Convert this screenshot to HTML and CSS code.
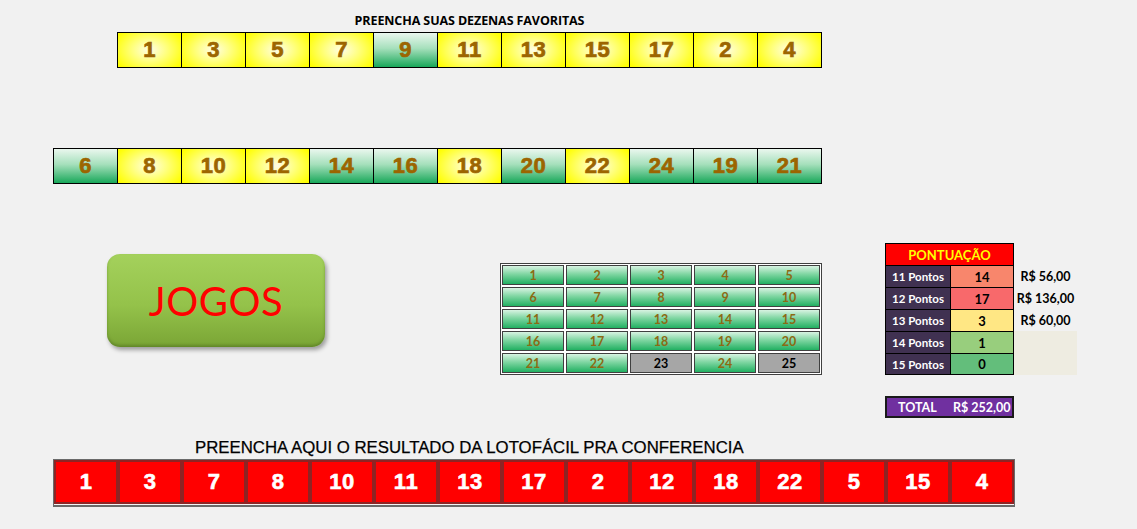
FILE: index.html
```html
<!DOCTYPE html>
<html>
<head>
<meta charset="utf-8">
<link rel="stylesheet" href="styles.css">
</head>
<body>
<div class="page">
  <div class="title1">PREENCHA SUAS DEZENAS FAVORITAS</div>
  <div class="row row1">
    <div class="cell y">1</div><div class="cell y">3</div><div class="cell y">5</div><div class="cell y">7</div><div class="cell g">9</div><div class="cell y">11</div><div class="cell y">13</div><div class="cell y">15</div><div class="cell y">17</div><div class="cell y">2</div><div class="cell y">4</div>
  </div>
  <div class="row row2">
    <div class="cell g">6</div><div class="cell y">8</div><div class="cell y">10</div><div class="cell y">12</div><div class="cell g">14</div><div class="cell g">16</div><div class="cell y">18</div><div class="cell g">20</div><div class="cell y">22</div><div class="cell g">24</div><div class="cell g">19</div><div class="cell g">21</div>
  </div>
  <div class="middle">
    <div class="jogos">JOGOS</div>
    <div class="grid">
      <div class="gc">1</div><div class="gc">2</div><div class="gc">3</div><div class="gc">4</div><div class="gc">5</div>
      <div class="gc">6</div><div class="gc">7</div><div class="gc">8</div><div class="gc">9</div><div class="gc">10</div>
      <div class="gc">11</div><div class="gc">12</div><div class="gc">13</div><div class="gc">14</div><div class="gc">15</div>
      <div class="gc">16</div><div class="gc">17</div><div class="gc">18</div><div class="gc">19</div><div class="gc">20</div>
      <div class="gc">21</div><div class="gc">22</div><div class="gc gray">23</div><div class="gc">24</div><div class="gc gray">25</div>
    </div>
    <div class="pont">
      <div class="ptable">
        <div class="phead">PONTUAÇÃO</div><div class="pblank"></div>
        <div class="plabel">11 Pontos</div><div class="pval v14">14</div><div class="pmoney">R$ 56,00</div>
        <div class="plabel">12 Pontos</div><div class="pval v17">17</div><div class="pmoney">R$ 136,00</div>
        <div class="plabel">13 Pontos</div><div class="pval v3">3</div><div class="pmoney">R$ 60,00</div>
        <div class="plabel">14 Pontos</div><div class="pval v1">1</div><div class="pmoney beige"></div>
        <div class="plabel">15 Pontos</div><div class="pval v0">0</div><div class="pmoney beige"></div>
      </div>
      <div class="total"><span>TOTAL</span><span>R$ 252,00</span></div>
    </div>
  </div>
  <div class="title2">PREENCHA AQUI O RESULTADO DA LOTOFÁCIL PRA CONFERENCIA</div>
  <div class="redrow">
    <div class="rc">1</div><div class="rc">3</div><div class="rc">7</div><div class="rc">8</div><div class="rc">10</div><div class="rc">11</div><div class="rc">13</div><div class="rc">17</div><div class="rc">2</div><div class="rc">12</div><div class="rc">18</div><div class="rc">22</div><div class="rc">5</div><div class="rc">15</div><div class="rc">4</div>
  </div>
</div>
</body>
</html>
```

FILE: styles.css
```css
html, body {
  margin: 0;
  padding: 0;
  background: #f1f1f1;
}
.page {
  width: 1137px;
  height: 529px;
  overflow: hidden;
  font-family: "Liberation Sans", Arial, sans-serif;
}
.title1 {
  margin: 13px 0 0 117px;
  width: 705px;
  text-align: center;
  font-family: "Open Sans", sans-serif;
  font-weight: 700;
  font-size: 12.5px;
  line-height: 16px;
  height: 18px;
  color: #000;
  letter-spacing: -0.1px;
}
.row {
  display: flex;
  border: 1px solid #000;
  width: max-content;
}
.row1 {
  margin: 1px 0 0 117px;
}
.row2 {
  margin: 80px 0 0 53px;
}
.cell {
  width: 63px;
  height: 34px;
  border-left: 1px solid #000;
  display: flex;
  align-items: center;
  justify-content: center;
  font-weight: 700;
  font-size: 22px;
  color: #9c6500;
  -webkit-text-stroke: 0.7px #9c6500;
  letter-spacing: 0.5px;
}
.cell:first-child {
  border-left: none;
}
.cell.y {
  background: radial-gradient(ellipse 60% 75% at 50% 50%, #fffde8 0%, #ffff80 45%, #ffff00 100%);
}
.cell.g {
  background: linear-gradient(#eaf7ee 0%, #a6e0bc 45%, #19a85a 100%);
}
.middle {
  display: flex;
  align-items: flex-start;
  margin-top: 59px;
}
.jogos {
  margin: 11px 0 0 107px;
  width: 218px;
  height: 93px;
  border-radius: 13px;
  background: linear-gradient(#a4d15c 0%, #94c24a 55%, #7aa535 100%);
  box-shadow: 2px 3px 4px rgba(0,0,0,0.35), inset 0 -2px 3px rgba(60,90,20,0.4);
  display: flex;
  align-items: center;
  justify-content: center;
  font-family: "Lato", sans-serif;
  font-size: 40px;
  color: #ff0000;
  letter-spacing: 0.5px;
}
.grid {
  margin: 20px 0 0 175px;
  border: 1px solid #404040;
  background: #ffffff;
  padding: 1px;
  display: grid;
  grid-template-columns: repeat(5, 1fr);
  grid-template-rows: repeat(5, 1fr);
  gap: 2px;
  box-sizing: border-box;
  width: 322px;
  height: 112px;
}
.gc {
  border: 1px solid #404040;
  background: linear-gradient(#d8f3e2 0%, #7fd6a2 45%, #22b062 100%);
  display: flex;
  align-items: center;
  justify-content: center;
  font-family: "Lato", sans-serif;
  font-weight: 700;
  font-size: 12.5px;
  color: #8c6a14;
}
.gc.gray {
  background: #a6a6a6;
  color: #000;
}
.pont {
  margin-left: 63px;
}
.ptable {
  display: grid;
  grid-template-columns: 65px 64px 63px;
  grid-template-rows: 22px repeat(5, 22px);
  font-family: "Lato", sans-serif;
  font-weight: 700;
  font-size: 12px;
}
.phead {
  grid-column: 1 / span 2;
  background: #ff0000;
  color: #ffff00;
  font-size: 13px;
  display: flex;
  align-items: center;
  justify-content: center;
  border: 1px solid #000;
  border-bottom: none;
}
.plabel {
  background: #403151;
  color: #fff;
  display: flex;
  align-items: center;
  justify-content: center;
  border-left: 1px solid #000;
  border-top: 1px solid #000;
  font-size: 11.5px;
}
.ptable > .plabel:nth-last-child(3) {
  border-bottom: 1px solid #000;
}
.pval {
  display: flex;
  align-items: center;
  justify-content: center;
  border-left: 1px solid #000;
  border-right: 1px solid #000;
  border-top: 1px solid #000;
  color: #000;
  font-size: 13px;
}
.ptable > .pval:nth-last-child(2) {
  border-bottom: 1px solid #000;
}
.v14 { background: #f8866c; }
.v17 { background: #f8696b; }
.v3 { background: #ffe784; }
.v1 { background: #98ce7d; }
.v0 { background: #63be7b; }
.pmoney {
  display: flex;
  align-items: center;
  justify-content: center;
  color: #000;
  font-size: 12.5px;
}
.pmoney.beige {
  background: #eeece1;
}
.total {
  margin-top: 21px;
  width: 129px;
  height: 22px;
  box-sizing: border-box;
  border: 2px solid #1a1a1a;
  background: #7030a0;
  color: #fff;
  display: flex;
  align-items: center;
  font-family: "Lato", sans-serif;
  font-weight: 700;
  font-size: 12.5px;
}
.total span:first-child {
  margin-left: 11px;
  width: 55px;
}
.title2 {
  margin: 21px 0 0 195px;
  font-family: "Liberation Sans", Arial, sans-serif;
  font-size: 16.8px;
  line-height: 18px;
  height: 18px;
  color: #000;
  -webkit-text-stroke: 0.25px #000;
}
.redrow {
  margin: 2px 0 0 53px;
  display: flex;
  width: max-content;
  border: 1px solid #6a6a6a;
  border-bottom: 2px solid #6a6a6a;
  padding-bottom: 1px;
  background: #f4f4f4;
}
.rc {
  width: 60px;
  height: 40px;
  border: 2px solid #8e2424;
  background: #ff0000;
  color: #fff;
  display: flex;
  align-items: center;
  justify-content: center;
  font-weight: 700;
  font-size: 22px;
  -webkit-text-stroke: 0.6px #fff;
  letter-spacing: 0.5px;
}
```
